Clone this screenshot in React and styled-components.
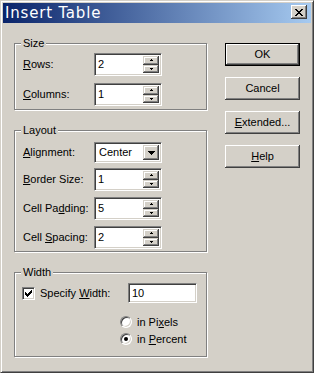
import React from 'react';
import styled, { createGlobalStyle, css } from 'styled-components';

const Global = createGlobalStyle`
  html, body { margin: 0; padding: 0; background: #ffffff; }
  body {
    font-family: "Liberation Sans", Arial, sans-serif;
    font-size: 11px;
    color: #000;
  }
  * { box-sizing: border-box; }
`;

const FACE = '#d4d0c8';
const raisedSmall = css`
  background: ${FACE};
  box-shadow: inset -1px -1px 0 #404040, inset 1px 1px 0 ${FACE},
    inset -2px -2px 0 #808080, inset 2px 2px 0 #ffffff;
`;
const sunken = css`
  border: 1px solid;
  border-color: #808080 #ffffff #ffffff #808080;
  box-shadow: inset 1px 1px 0 #404040, inset -1px -1px 0 ${FACE};
`;

const Window = styled.div`
  width: 314px;
  height: 373px;
  background: ${FACE};
  border: 1px solid;
  border-color: ${FACE} #404040 #404040 ${FACE};
  box-shadow: inset 1px 1px 0 #ffffff, inset -1px -1px 0 #808080;
  padding: 2px;
  display: flex;
  flex-direction: column;
`;

const TitleBar = styled.div`
  height: 20px;
  display: flex;
  align-items: center;
  padding-left: 2px;
  background: linear-gradient(to right, #0a246a, #a6caf0);
`;

const TitleText = styled.span`
  font-family: "DejaVu Sans", sans-serif;
  font-size: 15px;
  letter-spacing: 0.8px;
  color: #ffffff;
  line-height: 20px;
`;

const CloseButton = styled.div`
  width: 16px;
  height: 14px;
  margin-left: auto;
  margin-right: 4px;
  align-self: flex-start;
  margin-top: 2px;
  display: flex;
  align-items: center;
  justify-content: center;
  background: ${FACE};
  box-shadow: inset -1px -1px 0 #404040, inset 1px 1px 0 #ffffff,
    inset -2px -2px 0 #808080, inset 2px 2px 0 ${FACE};
`;

const Body = styled.div`
  display: flex;
  gap: 18px;
  padding: 20px 0 0 11px;
`;

const LeftCol = styled.div`
  width: 193px;
  display: flex;
  flex-direction: column;
  gap: 20px;
`;

const GroupBox = styled.div`
  position: relative;
  border: 1px solid #808080;
  box-shadow: 1px 1px 0 #ffffff, inset 1px 1px 0 #ffffff;
  padding: ${p => p.$pad};
  display: flex;
  flex-direction: column;
`;

const Caption = styled.span`
  position: absolute;
  top: -7px;
  left: 6px;
  line-height: 13px;
  padding: 0 2px;
  background: ${FACE};
`;

const FieldRow = styled.div`
  display: flex;
  align-items: center;
  height: ${p => p.$h}px;
  margin-top: ${p => p.$mt || 0}px;
`;

const Label = styled.span`
  width: 71px;
  line-height: 13px;
  white-space: nowrap;
`;

const EditBox = styled.div`
  ${sunken};
  width: ${p => p.$w}px;
  height: ${p => p.$h}px;
  background: #ffffff;
  padding: 2px;
  display: flex;
  align-items: stretch;
`;

const EditText = styled.span`
  flex: 1;
  padding-left: ${p => p.$pl || 1}px;
  display: flex;
  align-items: center;
  line-height: 13px;
`;

const SpinCol = styled.div`
  width: 16px;
  display: flex;
  flex-direction: column;
`;

const SpinBtn = styled.div`
  ${raisedSmall};
  height: ${p => p.$h}px;
  display: flex;
  align-items: center;
  justify-content: center;
`;

const DropBtn = styled.div`
  ${raisedSmall};
  width: 16px;
  display: flex;
  align-items: center;
  justify-content: center;
`;

const CheckRow = styled.div`
  display: flex;
  align-items: center;
  height: 20px;
  margin-left: -1px;
`;

const CheckBox = styled.span`
  ${sunken};
  width: 13px;
  height: 13px;
  background: #ffffff;
  display: flex;
  align-items: center;
  justify-content: center;
`;

const CheckLabel = styled.span`
  margin-left: 5px;
  width: 88px;
  line-height: 13px;
`;

const RadioGroup = styled.div`
  display: flex;
  flex-direction: column;
  gap: 5px;
  margin-top: 13px;
  padding-left: 97px;
`;

const RadioRow = styled.div`
  display: flex;
  align-items: center;
  height: 12px;
`;

const RadioDot = styled.span`
  position: relative;
  width: 12px;
  height: 12px;
  border-radius: 50%;
  border: 1px solid;
  border-color: #808080 #ffffff #ffffff #808080;
  background: #ffffff;
  box-shadow: inset 1px 1px 0 #404040, inset -1px -1px 0 ${FACE};
  ${p => p.$on && css`
    &::after {
      content: '';
      position: absolute;
      left: 3px;
      top: 3px;
      width: 4px;
      height: 4px;
      border-radius: 50%;
      background: #000;
    }
  `}
`;

const RadioLabel = styled.span`
  margin-left: 5px;
  line-height: 13px;
`;

const RightCol = styled.div`
  width: 75px;
  display: flex;
  flex-direction: column;
  gap: 11px;
`;

const PushButton = styled.div`
  width: 75px;
  height: 23px;
  display: flex;
  align-items: center;
  justify-content: center;
  background: ${FACE};
  line-height: 13px;
  box-shadow: inset -1px -1px 0 #404040, inset 1px 1px 0 #ffffff,
    inset -2px -2px 0 #808080, inset 2px 2px 0 ${FACE};
  ${p => p.$default && css`
    border: 1px solid #000;
  `}
`;

const Px = ({ w, h, d }) => (
  <svg width={w} height={h} viewBox={`0 0 ${w} ${h}`} shapeRendering="crispEdges" style={{ display: 'block' }}>
    <path d={d} fill="#000" />
  </svg>
);

const XGlyph = () => (
  <Px w={8} h={7} d="M0 0h2v1H0z M6 0h2v1H6z M1 1h2v1H1z M5 1h2v1H5z M2 2h4v1H2z M3 3h2v1H3z M2 4h4v1H2z M1 5h2v1H1z M5 5h2v1H5z M0 6h2v1H0z M6 6h2v1H6z" />
);
const UpArrow = () => <Px w={3} h={2} d="M1 0h1v1H1z M0 1h3v1H0z" />;
const DownArrow = () => <Px w={3} h={2} d="M0 0h3v1H0z M1 1h1v1H1z" />;
const ComboArrow = () => <Px w={7} h={4} d="M0 0h7v1H0z M1 1h5v1H1z M2 2h3v1H2z M3 3h1v1H3z" />;
const CheckMark = () => (
  <Px w={7} h={7} d="M0 2h1v3H0z M1 3h1v3H1z M2 4h1v3H2z M3 3h1v3H3z M4 2h1v3H4z M5 1h1v3H5z M6 0h1v3H6z" />
);

const Spin = ({ value }) => (
  <EditBox $w={68} $h={23}>
    <EditText>{value}</EditText>
    <SpinCol>
      <SpinBtn $h={10}><UpArrow /></SpinBtn>
      <SpinBtn $h={9}><DownArrow /></SpinBtn>
    </SpinCol>
  </EditBox>
);

const SpinField = ({ label, value, mt }) => (
  <FieldRow $h={23} $mt={mt}>
    <Label>{label}</Label>
    <Spin value={value} />
  </FieldRow>
);

export default function App() {
  return (
    <>
      <Global />
      <Window>
        <TitleBar>
          <TitleText>Insert Table</TitleText>
          <CloseButton><XGlyph /></CloseButton>
        </TitleBar>
        <Body>
          <LeftCol>
            <GroupBox $pad="9px 0 3px 8px">
              <Caption>Size</Caption>
              <SpinField label={<><u>R</u>ows:</>} value="2" />
              <SpinField label={<><u>C</u>olumns:</>} value="1" mt={7} />
            </GroupBox>
            <GroupBox $pad="11px 0 2px 8px">
              <Caption>Layout</Caption>
              <FieldRow $h={21}>
                <Label><u>A</u>lignment:</Label>
                <EditBox $w={68} $h={21}>
                  <EditText $pl={2}>Center</EditText>
                  <DropBtn><ComboArrow /></DropBtn>
                </EditBox>
              </FieldRow>
              <SpinField label={<><u>B</u>order Size:</>} value="1" mt={5} />
              <SpinField label={<>Cell Pa<u>d</u>ding:</>} value="5" mt={6} />
              <SpinField label={<>Cell <u>S</u>pacing:</>} value="2" mt={6} />
            </GroupBox>
            <GroupBox $pad="10px 0 11px 8px">
              <Caption>Width</Caption>
              <CheckRow>
                <CheckBox><CheckMark /></CheckBox>
                <CheckLabel>Specify <u>W</u>idth:</CheckLabel>
                <EditBox $w={69} $h={20}>
                  <EditText>10</EditText>
                </EditBox>
              </CheckRow>
              <RadioGroup>
                <RadioRow>
                  <RadioDot />
                  <RadioLabel>in Pi<u>x</u>els</RadioLabel>
                </RadioRow>
                <RadioRow>
                  <RadioDot $on />
                  <RadioLabel>in <u>P</u>ercent</RadioLabel>
                </RadioRow>
              </RadioGroup>
            </GroupBox>
          </LeftCol>
          <RightCol>
            <PushButton $default>OK</PushButton>
            <PushButton>Cancel</PushButton>
            <PushButton><span><u>E</u>xtended...</span></PushButton>
            <PushButton><span><u>H</u>elp</span></PushButton>
          </RightCol>
        </Body>
      </Window>
    </>
  );
}
